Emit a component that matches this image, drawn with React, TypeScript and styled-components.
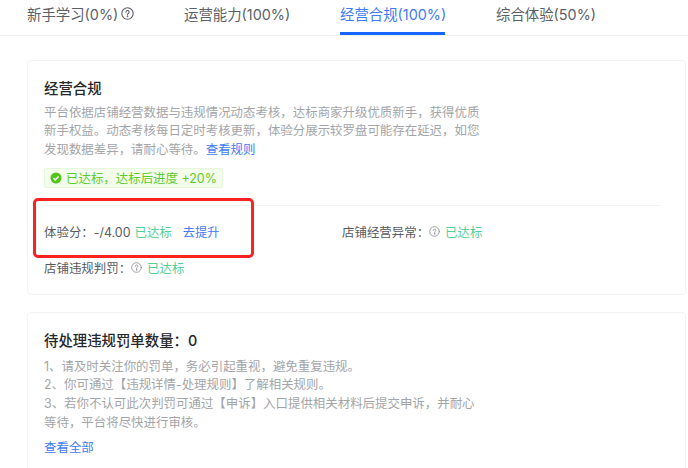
import React from "react"
import styled, { createGlobalStyle } from "styled-components"

const FONT = `Inter, "Noto Sans CJK SC", sans-serif`

const GlobalStyle = createGlobalStyle`
  html, body {
    margin: 0;
    padding: 0;
    background: #fff;
    font-family: ${FONT};
    overflow: hidden;
  }
`

const Page = styled.div`
  position: relative;
  width: 688px;
  height: 468px;
  overflow: hidden;
`

const Tabs = styled.div`
  display: flex;
  height: 35px;
  padding-left: 27px;
  border-bottom: 1px solid #f0f1f3;
`

const Tab = styled.div<{ $active?: boolean; $width: number }>`
  position: relative;
  display: flex;
  align-items: center;
  gap: 3px;
  width: ${(p) => p.$width}px;
  height: 35px;
  padding-bottom: 9px;
  box-sizing: border-box;
  font-size: 14.4px;
  white-space: nowrap;
  color: ${(p) => (p.$active ? "#3f7bf6" : "#5c5f66")};

  &::after {
    content: "";
    display: ${(p) => (p.$active ? "block" : "none")};
    position: absolute;
    left: 0;
    bottom: 0;
    width: 105px;
    height: 3px;
    background: #1966ff;
  }
`

const Content = styled.div`
  display: flex;
  flex-direction: column;
  gap: 17px;
  padding: 24px 2px 0 27px;
`

const Card = styled.section<{ $open?: boolean }>`
  border: 1px solid #f2f3f5;
  border-radius: 4px;
  padding: 18px 16px ${(p) => (p.$open ? "40px" : "0")};
  box-sizing: border-box;
`

const Title = styled.h3`
  margin: 0;
  font-size: 14.4px;
  line-height: 20px;
  font-weight: 500;
  color: #25272b;
`

const Desc = styled.p`
  margin: 5px 0 0;
  width: 440px;
  font-size: 12.45px;
  line-height: 18.3px;
  color: #a3a5a9;
`

const Link = styled.a`
  color: #3f7bf6;
  font-size: 12.45px;
`

const Badge = styled.div`
  display: flex;
  width: max-content;
  align-items: center;
  gap: 4px;
  height: 20px;
  margin-top: 9px;
  padding: 0 5px;
  border: 1px solid #e6f8d9;
  border-radius: 2px;
  background: #f4fdec;
  color: #5ccb2b;
  font-size: 12.45px;
  box-sizing: border-box;
`

const Divider = styled.div`
  width: 617px;
  height: 1px;
  margin-top: 17px;
  background: #f2f3f5;
`

const Metrics = styled.div`
  display: grid;
  grid-template-columns: 298px 1fr;
  grid-auto-rows: 36px;
  padding-top: 8px;
  padding-bottom: 8px;
`

const Metric = styled.div`
  display: flex;
  align-items: center;
  font-size: 12.45px;
  color: #595b60;
  white-space: nowrap;
`

const Status = styled.span`
  margin-left: 4px;
  font-size: 12.45px;
  color: #55d095;
`

const Improve = styled.a`
  margin-left: 11px;
  font-size: 12.2px;
  color: #3f7bf6;
`

const HelpWrap = styled.span`
  display: inline-flex;
  margin-right: 1px;
`

const Rules = styled.div`
  margin-top: 7px;
  width: 440px;
  font-size: 12.45px;
  line-height: 18.6px;
  color: #a3a5a9;
`

const ViewAll = styled(Link)`
  display: block;
  margin-top: 7px;
  line-height: 18px;
`

const Highlight = styled.div`
  position: absolute;
  left: 33px;
  top: 198px;
  width: 221px;
  height: 60px;
  border: 3px solid #fb2222;
  border-radius: 5px;
  box-sizing: border-box;
`

const HelpIcon = ({ size, color }: { size: number; color: string }) => (
  <svg width={size} height={size} viewBox="0 0 24 24" fill="none" stroke={color} strokeWidth="2" strokeLinecap="round">
    <circle cx="12" cy="12" r="10.5" />
    <path d="M9.2 9.5a2.9 2.9 0 1 1 4.4 2.4c-1 .6-1.6 1.1-1.6 2.2" />
    <circle cx="12" cy="17.2" r="0.6" fill={color} />
  </svg>
)

const CheckIcon = () => (
  <svg width="12" height="12" viewBox="0 0 12 12">
    <circle cx="6" cy="6" r="5.5" fill="#52c41a" />
    <path d="M3.4 6.1l1.8 1.8 3.4-3.5" fill="none" stroke="#fff" strokeWidth="1.4" />
  </svg>
)

const App: React.FC = () => {
  return (
    <Page>
      <GlobalStyle />
      <Tabs>
        <Tab $width={157}>
          新手学习(0%)
          <HelpIcon size={13} color="#5c5f66" />
        </Tab>
        <Tab $width={156}>运营能力(100%)</Tab>
        <Tab $width={156} $active>
          经营合规(100%)
        </Tab>
        <Tab $width={120}>综合体验(50%)</Tab>
      </Tabs>
      <Content>
        <Card>
          <Title>经营合规</Title>
          <Desc>
            平台依据店铺经营数据与违规情况动态考核，达标商家升级优质新手，获得优质新手权益。动态考核每日定时考核更新，体验分展示较罗盘可能存在延迟，如您发现数据差异，请耐心等待。
            <Link>查看规则</Link>
          </Desc>
          <Badge>
            <CheckIcon />
            已达标，达标后进度 +20%
          </Badge>
          <Divider />
          <Metrics>
            <Metric>
              体验分：-/4.00
              <Status>已达标</Status>
              <Improve>去提升</Improve>
            </Metric>
            <Metric>
              店铺经营异常：
              <HelpWrap>
                <HelpIcon size={11} color="#94969a" />
              </HelpWrap>
              <Status>已达标</Status>
            </Metric>
            <Metric>
              店铺违规判罚：
              <HelpWrap>
                <HelpIcon size={11} color="#94969a" />
              </HelpWrap>
              <Status>已达标</Status>
            </Metric>
          </Metrics>
        </Card>
        <Card $open>
          <Title>待处理违规罚单数量：0</Title>
          <Rules>
            <div>1、请及时关注你的罚单，务必引起重视，避免重复违规。</div>
            <div>2、你可通过【违规详情-处理规则】了解相关规则。</div>
            <div>3、若你不认可此次判罚可通过【申诉】入口提供相关材料后提交申诉，并耐心等待，平台将尽快进行审核。</div>
          </Rules>
          <ViewAll>查看全部</ViewAll>
        </Card>
      </Content>
      <Highlight />
    </Page>
  )
}

export default App
